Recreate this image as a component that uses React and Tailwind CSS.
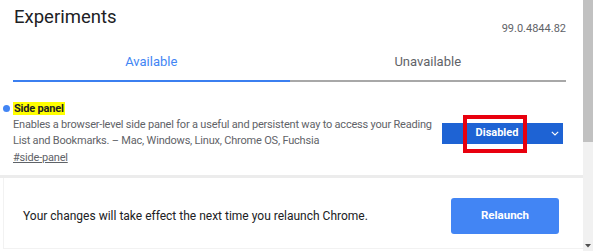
import React from "react";

export default function App() {
  return (
    <div className="flex w-[593px] h-[251px] overflow-hidden bg-white font-['Roboto',sans-serif]">
      <div className="flex flex-col w-[583px] h-full">
        {/* header */}
        <div className="flex justify-between items-start pl-[13px] pr-[17px] pt-[5px]">
          <div className="text-[18.5px] leading-[24px] text-[#202124] pl-[1px]">Experiments</div>
          <div className="mt-[17px] text-[11px] leading-[14px] text-[#5f6368]">99.0.4844.82</div>
        </div>
        {/* tabs */}
        <div className="flex pl-[13px] pr-[17px] mt-[8px]">
          <div className="flex-1 flex flex-col">
            <div className="h-[36px] flex items-center justify-center text-[13px] text-[#4285f4]">Available</div>
            <div className="h-[2px] bg-[#3b7ff0]" />
          </div>
          <div className="flex-1 flex flex-col">
            <div className="h-[36px] flex items-center justify-center text-[13px] text-[#5f6368]">Unavailable</div>
            <div className="h-[2px] bg-[#a8a8a8]" />
          </div>
        </div>
        {/* experiment */}
        <div className="flex items-center pl-[13px] pr-[20px] pt-[18px] pb-[9px]">
          <div className="w-[425px] flex flex-col">
            <div className="relative h-[16px] flex items-center">
              <span className="absolute left-[-10px] top-[5px] w-[7px] h-[7px] rounded-full bg-[#4285f4]" />
              <span className="bg-[#ffff00] text-[11px] tracking-[-0.2px] leading-[13px] font-bold text-[#202124] px-[1px]">Side panel</span>
            </div>
            <div className="mt-[1px] text-[11px] tracking-[-0.2px] leading-[16px] text-[#5f6368]">
              Enables a browser-level side panel for a useful and persistent way to access your Reading List and Bookmarks. – Mac, Windows, Linux, Chrome OS, Fuchsia
            </div>
            <div className="text-[11px] tracking-[-0.2px] leading-[16px] text-[#5f6368] underline mt-[1px]">#side-panel</div>
          </div>
          <div className="relative ml-auto w-[121px] h-[21px] bg-[#1e63d4] flex items-center">
            <div className="w-[110px] text-center text-[11px] font-bold text-white">Disabled</div>
            <svg width="8" height="5" viewBox="0 0 8 5" className="ml-[-1px]">
              <path d="M0.8 0.8 L4 4 L7.2 0.8" fill="none" stroke="white" strokeWidth="1.1" />
            </svg>
            <div className="absolute left-[21px] top-[-8px] w-[64px] h-[38px] border-[4px] border-[#e8000e]" />
          </div>
        </div>
        {/* separator */}
        <div className="h-[3px] bg-[#ececec]" />
        {/* footer */}
        <div className="ml-[3px] h-[71px] flex items-center pt-[5px] pl-[19px] pr-[24px] border-l border-b border-[#f2f2f2]">
          <div className="text-[12px] text-[#202124]">Your changes will take effect the next time you relaunch Chrome.</div>
          <div className="ml-auto w-[108px] h-[36px] rounded-[3px] bg-[#4285f4] flex items-center justify-center text-[11.5px] font-bold text-white">
            Relaunch
          </div>
        </div>
      </div>
      {/* scrollbar */}
      <div className="w-[10px] h-full flex flex-col bg-[#f1f1f1]">
        <div className="h-[142px] bg-[#c1c1c1]" />
        <div className="flex-1" />
        <div className="h-[10px] flex items-center justify-center">
          <svg width="6" height="4" viewBox="0 0 6 4">
            <path d="M0 0 L6 0 L3 3.5 Z" fill="#505050" />
          </svg>
        </div>
      </div>
    </div>
  );
}
